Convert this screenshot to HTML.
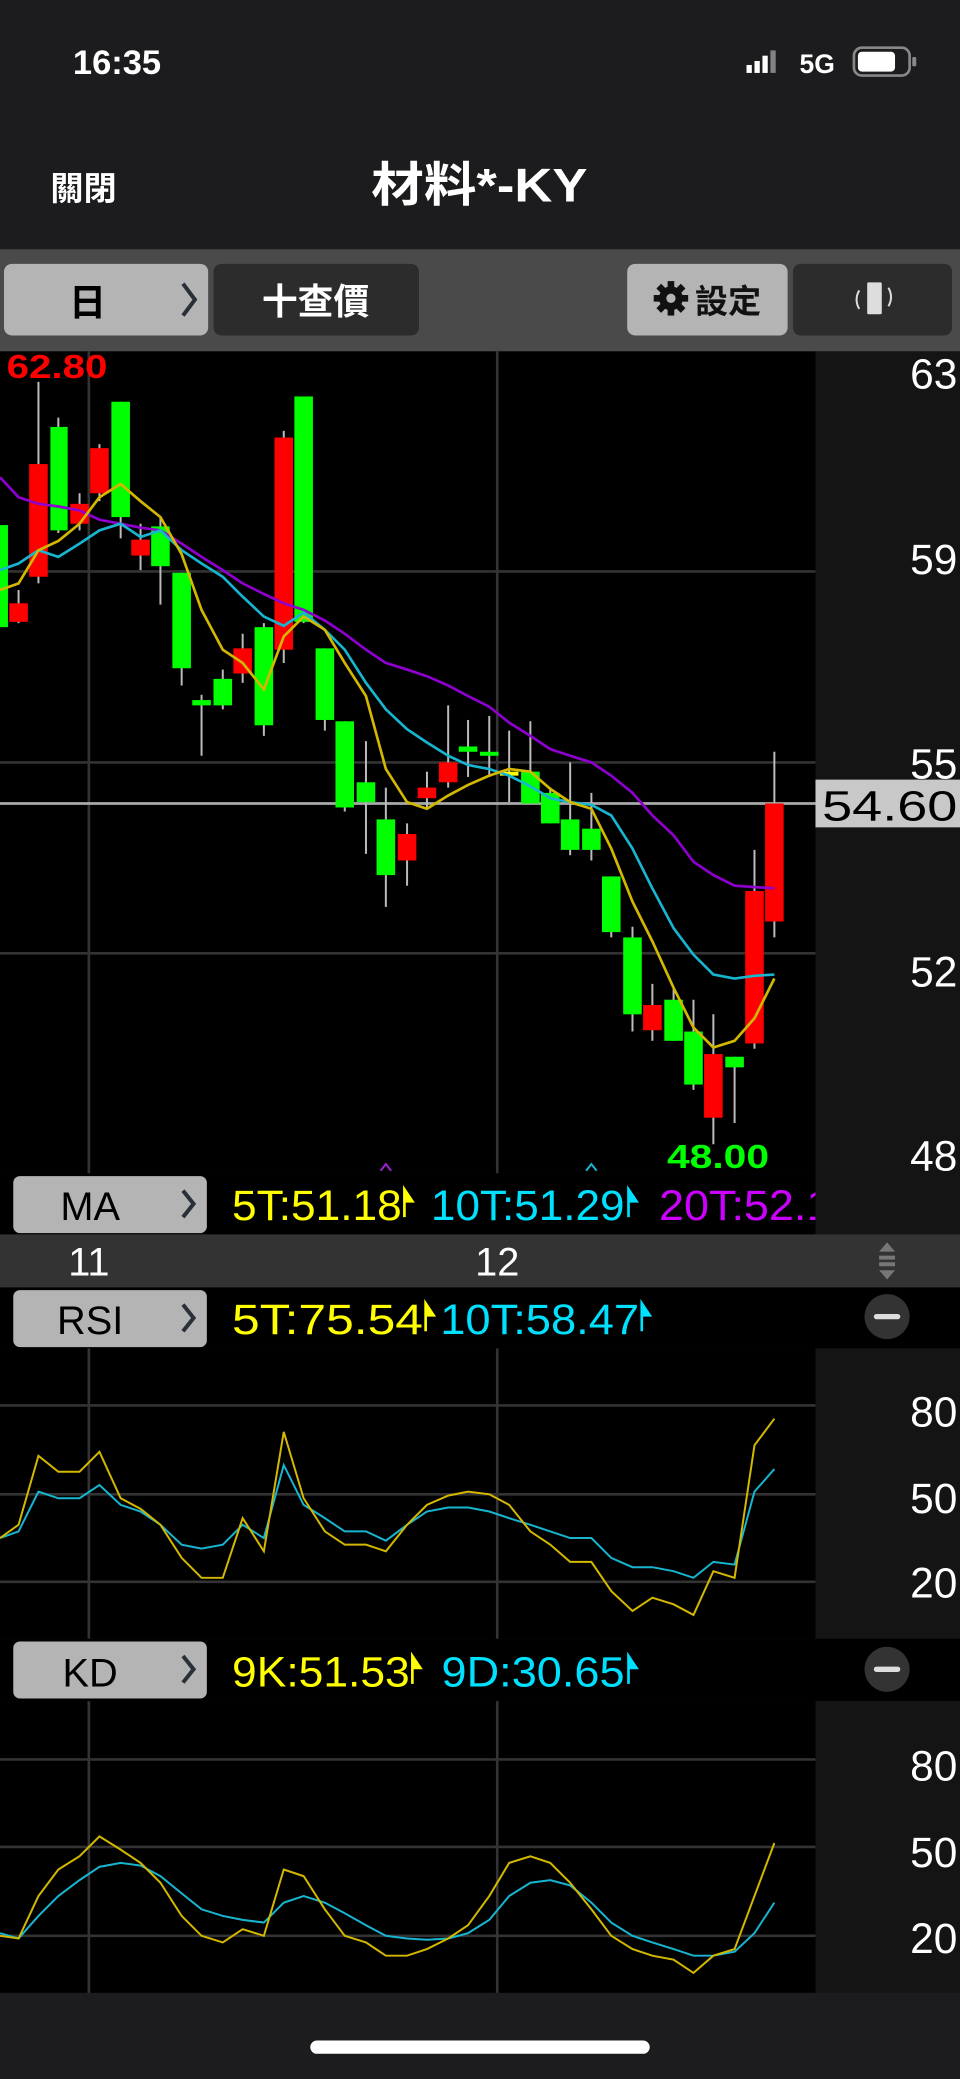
<!DOCTYPE html>
<html><head><meta charset="utf-8"><style>
html,body{margin:0;padding:0;background:#1c1c1e;}
svg{display:block;}
text{font-family:"Liberation Sans","Noto Sans CJK TC",sans-serif;}
</style></head><body>
<svg width="960" height="2079" viewBox="0 0 724 1568" preserveAspectRatio="none" xmlns="http://www.w3.org/2000/svg">
<rect x="0" y="0" width="724" height="1568" fill="#1c1c1e"/>
<text x="55" y="56" fill="#fff" font-size="26" font-weight="bold">16:35</text>
<rect x="563" y="49" width="4" height="6" fill="#fff"/><rect x="569" y="46" width="4" height="9" fill="#fff"/><rect x="575" y="42" width="4" height="13" fill="#fff"/><rect x="581" y="38" width="4" height="17" fill="#fff" opacity="0.45"/>
<text x="603" y="55" fill="#fff" font-size="20" font-weight="bold">5G</text>
<rect x="644" y="36" width="42" height="21" rx="6" fill="none" stroke="#888" stroke-width="2"/>
<rect x="647" y="39" width="28" height="15" rx="3" fill="#fff"/>
<rect x="688" y="43" width="3" height="7" rx="1" fill="#888"/>
<text x="38" y="151" fill="#fff" font-size="25" font-weight="bold">關閉</text>
<text x="280" y="152" fill="#fff" font-size="36" font-weight="bold" textLength="163" lengthAdjust="spacingAndGlyphs">材料*-KY</text>
<rect x="0" y="188" width="724" height="77" fill="#4a4a4a"/>
<rect x="3" y="199" width="154" height="54" rx="6" fill="#b4b4b4"/>
<text x="66" y="238" fill="#000" font-size="28" font-weight="bold" text-anchor="middle">日</text>
<path d="M138 214 L147 226 L138 238" fill="none" stroke="#2a3038" stroke-width="3"/>
<rect x="161" y="199" width="155" height="54" rx="6" fill="#2c2c2c"/>
<text x="238" y="237" fill="#fff" font-size="27" font-weight="bold" text-anchor="middle">十查價</text>
<rect x="473" y="199" width="121" height="54" rx="6" fill="#b4b4b4"/>
<g transform="translate(506,225)" fill="#111">
<circle r="9"/>
<rect x="-2.5" y="-13" width="5" height="26"/><rect x="-13" y="-2.5" width="26" height="5"/>
<rect x="-2.5" y="-13" width="5" height="26" transform="rotate(45)"/><rect x="-2.5" y="-13" width="5" height="26" transform="rotate(-45)"/>
</g>
<circle cx="506" cy="225" r="3.5" fill="#b4b4b4"/>
<text x="549" y="236" fill="#111" font-size="25" font-weight="bold" text-anchor="middle">設定</text>
<rect x="598" y="199" width="120" height="54" rx="6" fill="#2c2c2c"/>
<rect x="654" y="213" width="11" height="24" rx="1" fill="#ddd"/>
<path d="M648 219 Q644 226 648 233" fill="none" stroke="#ddd" stroke-width="1.5"/>
<path d="M670 217 Q674 224 670 231" fill="none" stroke="#ddd" stroke-width="1.5"/>
<rect x="0" y="265" width="615" height="620" fill="#000"/>
<rect x="615" y="265" width="109" height="666" fill="#141414"/>
<g stroke="#333" stroke-width="2">
<line x1="0" y1="431" x2="615" y2="431"/><line x1="0" y1="575" x2="615" y2="575"/><line x1="0" y1="719" x2="615" y2="719"/>
<line x1="67" y1="265" x2="67" y2="885"/><line x1="375" y1="265" x2="375" y2="885"/>
</g>
<g fill="#fff" font-size="32" text-anchor="end">
<text x="722" y="293">63</text><text x="722" y="433">59</text><text x="722" y="587">55</text><text x="722" y="744">52</text><text x="722" y="883">48</text>
</g>
<line x1="0" y1="606" x2="615" y2="606" stroke="#aaa" stroke-width="2"/>
<rect x="615" y="588" width="109" height="36" fill="#c8c8c8"/>
<text x="620" y="619" fill="#000" font-size="32" textLength="102" lengthAdjust="spacingAndGlyphs">54.60</text>
<g stroke="#bbb" stroke-width="1.5">
<line x1="14" y1="445" x2="14" y2="470"/><line x1="29" y1="288" x2="29" y2="440"/><line x1="44" y1="315" x2="44" y2="402"/><line x1="60" y1="372" x2="60" y2="400"/><line x1="75" y1="335" x2="75" y2="378"/><line x1="91" y1="303" x2="91" y2="406"/><line x1="106" y1="395" x2="106" y2="430"/><line x1="121" y1="390" x2="121" y2="456"/><line x1="137" y1="432" x2="137" y2="517"/><line x1="152" y1="524" x2="152" y2="570"/><line x1="168" y1="505" x2="168" y2="535"/><line x1="183" y1="478" x2="183" y2="515"/><line x1="199" y1="470" x2="199" y2="555"/><line x1="214" y1="325" x2="214" y2="500"/><line x1="229" y1="299" x2="229" y2="470"/><line x1="245" y1="489" x2="245" y2="551"/><line x1="260" y1="544" x2="260" y2="612"/><line x1="276" y1="559" x2="276" y2="644"/><line x1="291" y1="594" x2="291" y2="684"/><line x1="307" y1="621" x2="307" y2="668"/><line x1="322" y1="582" x2="322" y2="609"/><line x1="338" y1="532" x2="338" y2="594"/><line x1="353" y1="543" x2="353" y2="586"/><line x1="369" y1="540" x2="369" y2="586"/><line x1="384" y1="551" x2="384" y2="605"/><line x1="400" y1="544" x2="400" y2="606"/><line x1="415" y1="594" x2="415" y2="621"/><line x1="430" y1="575" x2="430" y2="645"/><line x1="446" y1="598" x2="446" y2="649"/><line x1="461" y1="661" x2="461" y2="707"/><line x1="477" y1="699" x2="477" y2="778"/><line x1="492" y1="742" x2="492" y2="785"/><line x1="508" y1="746" x2="508" y2="785"/><line x1="523" y1="754" x2="523" y2="822"/><line x1="538" y1="765" x2="538" y2="863"/><line x1="554" y1="797" x2="554" y2="847"/><line x1="569" y1="641" x2="569" y2="791"/><line x1="584" y1="567" x2="584" y2="707"/>
</g>
<g fill="#00ff00">
<rect x="-7" y="396" width="13" height="77"/><rect x="38" y="322" width="13" height="78"/><rect x="84" y="303" width="14" height="87"/><rect x="114" y="397" width="14" height="30"/><rect x="130" y="432" width="14" height="72"/><rect x="145" y="528" width="14" height="4"/><rect x="161" y="512" width="14" height="20"/><rect x="192" y="473" width="14" height="74"/><rect x="222" y="299" width="14" height="170"/><rect x="238" y="489" width="14" height="54"/><rect x="253" y="544" width="14" height="65"/><rect x="269" y="590" width="14" height="15"/><rect x="284" y="618" width="14" height="42"/><rect x="346" y="563" width="14" height="4"/><rect x="362" y="567" width="14" height="3"/><rect x="393" y="582" width="14" height="24"/><rect x="408" y="598" width="14" height="23"/><rect x="423" y="618" width="14" height="23"/><rect x="439" y="625" width="14" height="16"/><rect x="454" y="661" width="14" height="42"/><rect x="470" y="707" width="14" height="58"/><rect x="501" y="754" width="14" height="31"/><rect x="516" y="778" width="14" height="40"/><rect x="547" y="797" width="14" height="8"/>
</g>
<g fill="#ff0000">
<rect x="7" y="455" width="14" height="14"/><rect x="22" y="350" width="14" height="85"/><rect x="53" y="380" width="14" height="15"/><rect x="68" y="338" width="14" height="34"/><rect x="99" y="407" width="14" height="12"/><rect x="176" y="489" width="14" height="19"/><rect x="207" y="330" width="14" height="160"/><rect x="300" y="629" width="14" height="20"/><rect x="315" y="594" width="14" height="8"/><rect x="331" y="575" width="14" height="15"/><rect x="485" y="758" width="14" height="19"/><rect x="531" y="795" width="14" height="48"/><rect x="562" y="672" width="14" height="115"/><rect x="577" y="606" width="14" height="89"/>
</g>
<rect x="377" y="582" width="14" height="3" fill="#ffff00"/>
<g fill="none" stroke-width="2">
<polyline stroke="#8f00d0" points="0,360 14,375 29,380 44,382 60,385 75,392 91,395 106,398 121,400 137,410 152,420 168,430 183,440 199,448 214,455 229,460 245,468 260,478 276,490 291,500 307,505 322,510 338,517 353,525 369,533 384,545 400,555 415,565 430,570 446,575 461,585 477,598 492,615 508,630 523,650 538,660 554,668 569,669 584,670"/>
<polyline stroke="#17b5d0" points="0,430 14,425 29,415 44,420 60,410 75,400 91,395 106,405 121,400 137,415 152,425 168,435 183,450 199,465 214,472 229,462 245,475 260,490 276,515 291,535 307,550 322,560 338,570 353,577 369,580 384,585 400,593 415,602 430,605 446,607 461,615 477,640 492,670 508,700 523,720 538,735 554,738 569,736 584,735"/>
<polyline stroke="#d4b800" points="0,445 14,440 29,415 44,408 60,395 75,375 91,365 106,378 121,390 137,418 152,460 168,490 183,500 199,520 214,480 229,465 245,475 260,500 276,525 291,580 307,605 322,610 338,600 353,592 369,585 384,580 400,582 415,595 430,605 446,610 461,640 477,680 492,710 508,745 523,775 538,790 554,785 569,768 584,738"/>
</g>
<text x="5" y="285" fill="#ff0000" font-size="25" font-weight="bold" textLength="76" lengthAdjust="spacingAndGlyphs">62.80</text>
<text x="503" y="881" fill="#00ff00" font-size="25" font-weight="bold" textLength="77" lengthAdjust="spacingAndGlyphs">48.00</text>
<path d="M287 883 L291 878 L295 883" fill="none" stroke="#a020d0" stroke-width="1.5"/>
<path d="M442 883 L446 878 L450 883" fill="none" stroke="#17b5d0" stroke-width="1.5"/>
<rect x="0" y="885" width="615" height="46" fill="#000"/>
<rect x="10" y="887" width="146" height="43" rx="5" fill="#b4b4b4"/>
<text x="68" y="920" fill="#000" font-size="30" text-anchor="middle">MA</text>
<path d="M138 898 L146 908 L138 918" fill="none" stroke="#2a3038" stroke-width="3"/>
<g font-size="32">
<text x="175" y="920" fill="#ffff00" textLength="128" lengthAdjust="spacingAndGlyphs">5T:51.18</text><path d="M305 897 L305 918 M305 897 L311 906 L305 906Z" fill="#ffff00" stroke="#ffff00" stroke-width="2"/>
<text x="325" y="920" fill="#00e0ff" textLength="146" lengthAdjust="spacingAndGlyphs">10T:51.29</text><path d="M474 897 L474 918 M474 897 L480 906 L474 906Z" fill="#00e0ff" stroke="#00e0ff" stroke-width="2"/>
<text x="497" y="920" fill="#cc00ff" textLength="130" lengthAdjust="spacingAndGlyphs">20T:52.1</text>
</g>
<rect x="615" y="885" width="109" height="46" fill="#141414"/>
<rect x="0" y="931" width="724" height="40" fill="#333"/>
<text x="67" y="962" fill="#fff" font-size="30" text-anchor="middle">11</text>
<text x="375" y="962" fill="#fff" font-size="30" text-anchor="middle">12</text>
<path d="M663 944 L669 937 L675 944Z M663 958 L669 965 L675 958Z" fill="#777"/>
<rect x="663" y="947" width="12" height="3" fill="#777"/><rect x="663" y="952" width="12" height="3" fill="#777"/>
<rect x="0" y="971" width="724" height="46" fill="#000"/>
<rect x="10" y="973" width="146" height="43" rx="5" fill="#b4b4b4"/>
<text x="68" y="1006" fill="#000" font-size="30" text-anchor="middle">RSI</text>
<path d="M138 984 L146 994 L138 1004" fill="none" stroke="#2a3038" stroke-width="3"/>
<g font-size="32">
<text x="175" y="1006" fill="#ffff00" textLength="144" lengthAdjust="spacingAndGlyphs">5T:75.54</text><path d="M321 983 L321 1004 M321 983 L327 992 L321 992Z" fill="#ffff00" stroke="#ffff00" stroke-width="2"/>
<text x="332" y="1006" fill="#00e0ff" textLength="150" lengthAdjust="spacingAndGlyphs">10T:58.47</text><path d="M484 983 L484 1004 M484 983 L490 992 L484 992Z" fill="#00e0ff" stroke="#00e0ff" stroke-width="2"/>
</g>
<circle cx="669" cy="993" r="17" fill="#333"/><rect x="659" y="991" width="20" height="4" rx="2" fill="#ddd"/>
<rect x="0" y="1017" width="615" height="219" fill="#000"/>
<rect x="615" y="1017" width="109" height="219" fill="#141414"/>
<g stroke="#333" stroke-width="2">
<line x1="0" y1="1060" x2="615" y2="1060"/><line x1="0" y1="1127" x2="615" y2="1127"/><line x1="0" y1="1193" x2="615" y2="1193"/>
<line x1="67" y1="1017" x2="67" y2="1236"/><line x1="375" y1="1017" x2="375" y2="1236"/>
</g>
<g fill="#fff" font-size="32" text-anchor="end"><text x="722" y="1076">80</text><text x="722" y="1141">50</text><text x="722" y="1205">20</text></g>
<g fill="none" stroke-width="1.5">
<polyline stroke="#17b5d0" points="0,1160 14,1155 29,1125 44,1130 60,1130 75,1120 91,1135 106,1140 121,1150 137,1165 152,1168 168,1165 183,1150 199,1160 214,1105 229,1135 245,1145 260,1155 276,1155 291,1162 307,1150 322,1140 338,1137 353,1137 369,1140 384,1145 400,1150 415,1155 430,1160 446,1160 461,1175 477,1182 492,1182 508,1185 523,1190 538,1178 554,1180 569,1125 584,1108"/>
<polyline stroke="#d4b800" points="0,1160 14,1150 29,1098 44,1110 60,1110 75,1095 91,1130 106,1138 121,1150 137,1175 152,1190 168,1190 183,1145 199,1170 214,1080 229,1130 245,1155 260,1165 276,1165 291,1170 307,1150 322,1135 338,1128 353,1125 369,1127 384,1135 400,1155 415,1165 430,1178 446,1178 461,1200 477,1215 492,1205 508,1210 523,1218 538,1185 554,1190 569,1090 584,1070"/>
</g>
<rect x="0" y="1236" width="724" height="47" fill="#000"/>
<rect x="10" y="1238" width="146" height="43" rx="5" fill="#b4b4b4"/>
<text x="68" y="1272" fill="#000" font-size="30" text-anchor="middle">KD</text>
<path d="M138 1249 L146 1259 L138 1269" fill="none" stroke="#2a3038" stroke-width="3"/>
<g font-size="32">
<text x="175" y="1272" fill="#ffff00" textLength="134" lengthAdjust="spacingAndGlyphs">9K:51.53</text><path d="M311 1249 L311 1270 M311 1249 L317 1258 L311 1258Z" fill="#ffff00" stroke="#ffff00" stroke-width="2"/>
<text x="333" y="1272" fill="#00e0ff" textLength="138" lengthAdjust="spacingAndGlyphs">9D:30.65</text><path d="M474 1249 L474 1270 M474 1249 L480 1258 L474 1258Z" fill="#00e0ff" stroke="#00e0ff" stroke-width="2"/>
</g>
<circle cx="669" cy="1259" r="17" fill="#333"/><rect x="659" y="1257" width="20" height="4" rx="2" fill="#ddd"/>
<rect x="0" y="1283" width="615" height="220" fill="#000"/>
<rect x="615" y="1283" width="109" height="220" fill="#141414"/>
<g stroke="#333" stroke-width="2">
<line x1="0" y1="1327" x2="615" y2="1327"/><line x1="0" y1="1393" x2="615" y2="1393"/><line x1="0" y1="1460" x2="615" y2="1460"/>
<line x1="67" y1="1283" x2="67" y2="1503"/><line x1="375" y1="1283" x2="375" y2="1503"/>
</g>
<g fill="#fff" font-size="32" text-anchor="end"><text x="722" y="1343">80</text><text x="722" y="1408">50</text><text x="722" y="1473">20</text></g>
<g fill="none" stroke-width="1.5">
<polyline stroke="#17b5d0" points="0,1458 14,1462 29,1445 44,1430 60,1418 75,1408 91,1405 106,1407 121,1415 137,1428 152,1440 168,1445 183,1448 199,1450 214,1435 229,1430 245,1435 260,1443 276,1452 291,1460 307,1462 322,1463 338,1462 353,1458 369,1448 384,1430 400,1420 415,1418 430,1422 446,1435 461,1450 477,1460 492,1465 508,1470 523,1475 538,1475 554,1472 569,1458 584,1435"/>
<polyline stroke="#d4b800" points="0,1460 14,1462 29,1430 44,1410 60,1400 75,1385 91,1395 106,1405 121,1420 137,1445 152,1460 168,1465 183,1455 199,1460 214,1410 229,1415 245,1440 260,1460 276,1465 291,1475 307,1475 322,1470 338,1462 353,1452 369,1430 384,1405 400,1400 415,1405 430,1420 446,1440 461,1460 477,1470 492,1475 508,1478 523,1488 538,1475 554,1470 569,1430 584,1390"/>
</g>
<rect x="234" y="1539" width="256" height="10" rx="5" fill="#fff"/>
</svg>
</body></html>
